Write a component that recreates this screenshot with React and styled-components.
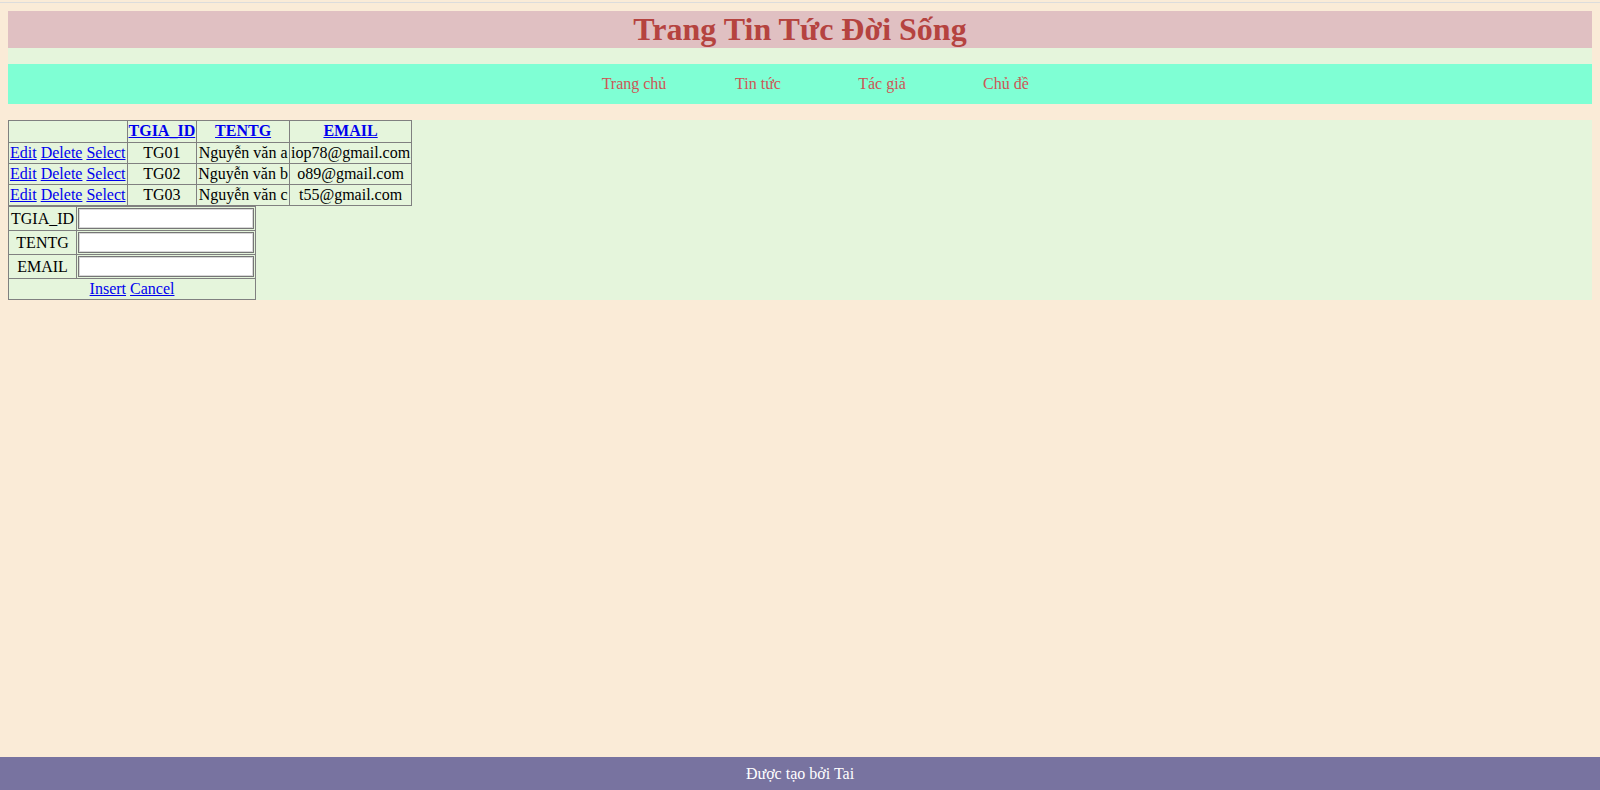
import styled, { createGlobalStyle } from "styled-components";

const GlobalStyle = createGlobalStyle`
  html {
    background-color: #faebd7;
  }
  body {
    margin: 2px 0 0;
    padding: 8px 8px 0;
    border-top: 1px solid #dcdcdc;
    font-family: "Liberation Serif", "Times New Roman", serif;
    font-size: 16px;
    color: #000;
  }
`;

const Masthead = styled.div`
  background-color: #e5f5dc;
  padding-bottom: 16px;
`;

const Title = styled.h1`
  margin: 0;
  background-color: #e0c0c2;
  color: #b5433f;
  font-size: 32px;
  font-weight: bold;
  text-align: center;
  line-height: 37px;
`;

const Nav = styled.ul`
  display: flex;
  justify-content: center;
  align-items: center;
  height: 40px;
  margin: 0 0 16px;
  padding: 0 0 0 40px;
  list-style: none;
  background-color: #7fffd4;
`;

const NavItem = styled.li`
  width: 124px;
  text-align: center;
  color: #cd5656;
  font-size: 16px;
`;

const Content = styled.div`
  background-color: #e5f5dc;
`;

const Grid = styled.table`
  border-collapse: collapse;
  border: 1px solid #808080;
`;

const HeadCell = styled.th`
  border: 1px solid #808080;
  padding: 1px 1px 2px;
  font-weight: bold;
  line-height: 18px;
  text-align: center;
  white-space: nowrap;
`;

const Cell = styled.td`
  border: 1px solid #808080;
  padding: 1px;
  line-height: 18px;
  text-align: ${(props) => (props.$left ? "left" : "center")};
  white-space: nowrap;
`;

const Link = styled.a`
  color: #0000ee;
  text-decoration: underline;
  cursor: pointer;
`;

const FormTable = styled.table`
  border-collapse: collapse;
  border: 1px solid #808080;
`;

const FormLabel = styled.td`
  border: 1px solid #808080;
  padding: 1px 2px;
  line-height: 18px;
  text-align: center;
  white-space: nowrap;
`;

const FormField = styled.td`
  border: 1px solid #808080;
  padding: 1px;
`;

const TextBox = styled.input`
  display: block;
  box-sizing: border-box;
  width: 176px;
  height: 21px;
  margin: 0;
  border: 1px solid #767676;
  box-shadow: inset 0 0 0 1px #d8d8d8;
  background: #fff;
  font-size: 13px;
`;

const Actions = styled.td`
  border: 1px solid #808080;
  padding: 1px 2px;
  line-height: 18px;
  text-align: center;
`;

const Footer = styled.footer`
  position: fixed;
  left: 0;
  right: 0;
  bottom: 0;
  height: 33px;
  display: flex;
  align-items: center;
  justify-content: center;
  background-color: #7873a0;
  color: #fff;
  font-size: 16px;
`;

const authors = [
  { id: "TG01", name: "Nguyễn văn a", email: "iop78@gmail.com" },
  { id: "TG02", name: "Nguyễn văn b", email: "o89@gmail.com" },
  { id: "TG03", name: "Nguyễn văn c", email: "t55@gmail.com" },
];

function App() {
  return (
    <>
      <GlobalStyle />
      <Masthead>
        <Title>Trang Tin Tức Đời Sống</Title>
      </Masthead>
      <Nav>
        <NavItem>Trang chủ</NavItem>
        <NavItem>Tin tức</NavItem>
        <NavItem>Tác giả</NavItem>
        <NavItem>Chủ đề</NavItem>
      </Nav>
      <Content>
        <Grid>
          <thead>
            <tr>
              <HeadCell>&nbsp;</HeadCell>
              <HeadCell>
                <Link>TGIA_ID</Link>
              </HeadCell>
              <HeadCell>
                <Link>TENTG</Link>
              </HeadCell>
              <HeadCell>
                <Link>EMAIL</Link>
              </HeadCell>
            </tr>
          </thead>
          <tbody>
            {authors.map((a) => (
              <tr key={a.id}>
                <Cell $left>
                  <Link>Edit</Link> <Link>Delete</Link> <Link>Select</Link>
                </Cell>
                <Cell>{a.id}</Cell>
                <Cell>{a.name}</Cell>
                <Cell>{a.email}</Cell>
              </tr>
            ))}
          </tbody>
        </Grid>
        <FormTable>
          <tbody>
            <tr>
              <FormLabel>TGIA_ID</FormLabel>
              <FormField>
                <TextBox type="text" />
              </FormField>
            </tr>
            <tr>
              <FormLabel>TENTG</FormLabel>
              <FormField>
                <TextBox type="text" />
              </FormField>
            </tr>
            <tr>
              <FormLabel>EMAIL</FormLabel>
              <FormField>
                <TextBox type="text" />
              </FormField>
            </tr>
            <tr>
              <Actions colSpan={2}>
                <Link>Insert</Link> <Link>Cancel</Link>
              </Actions>
            </tr>
          </tbody>
        </FormTable>
      </Content>
      <Footer>Được tạo bởi Tai</Footer>
    </>
  );
}

export default App;
